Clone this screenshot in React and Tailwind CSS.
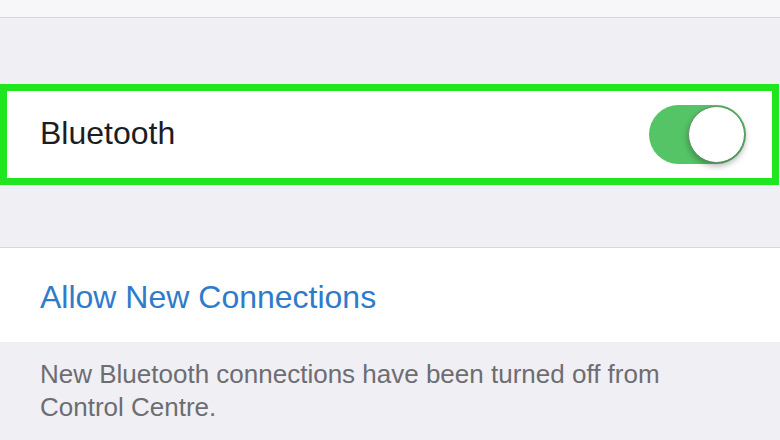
import React from 'react';

const Toggle = () => (
    <div className="relative w-[97px] h-[59px] rounded-full bg-[#55c466]">
        <div className="absolute right-[1px] top-[1px] w-[57px] h-[57px] rounded-full bg-white border border-[#5e8f66] shadow-[0_3px_6px_rgba(0,0,0,0.3)]"></div>
    </div>
);

const App = () => {
    return (
        <div className="w-[780px] h-[440px] overflow-hidden bg-[#efeff4] flex flex-col" style={{ fontFamily: '"Liberation Sans", Arial, sans-serif' }}>
            {/* top row remnant */}
            <div className="h-[18px] shrink-0 bg-[#f7f7f9] border-b border-[#d8d8dc]"></div>

            <div className="h-[66px] shrink-0"></div>

            {/* highlighted bluetooth row */}
            <div className="h-[101px] shrink-0 w-[779px] bg-white border-[7px] border-[#1fe61f] flex items-center justify-between pl-[33px] pr-[26px]">
                <span className="text-[32px] leading-none text-[#1d1d1f] -mt-[3px]">Bluetooth</span>
                <Toggle />
            </div>

            <div className="h-[63px] shrink-0 border-b border-[#d8d8dc]"></div>

            {/* allow new connections */}
            <div className="h-[94px] shrink-0 bg-white flex items-center pl-[40px]">
                <span className="text-[32px] leading-none text-[#2f7bcb] mt-[4px]">Allow New Connections</span>
            </div>

            {/* footer note */}
            <div className="pt-[16px] pl-[40px] pr-[60px] text-[26px] leading-[33px] text-[#6d6d72]">
                New Bluetooth connections have been turned off from<br />Control Centre.
            </div>
        </div>
    );
};

export default App;
